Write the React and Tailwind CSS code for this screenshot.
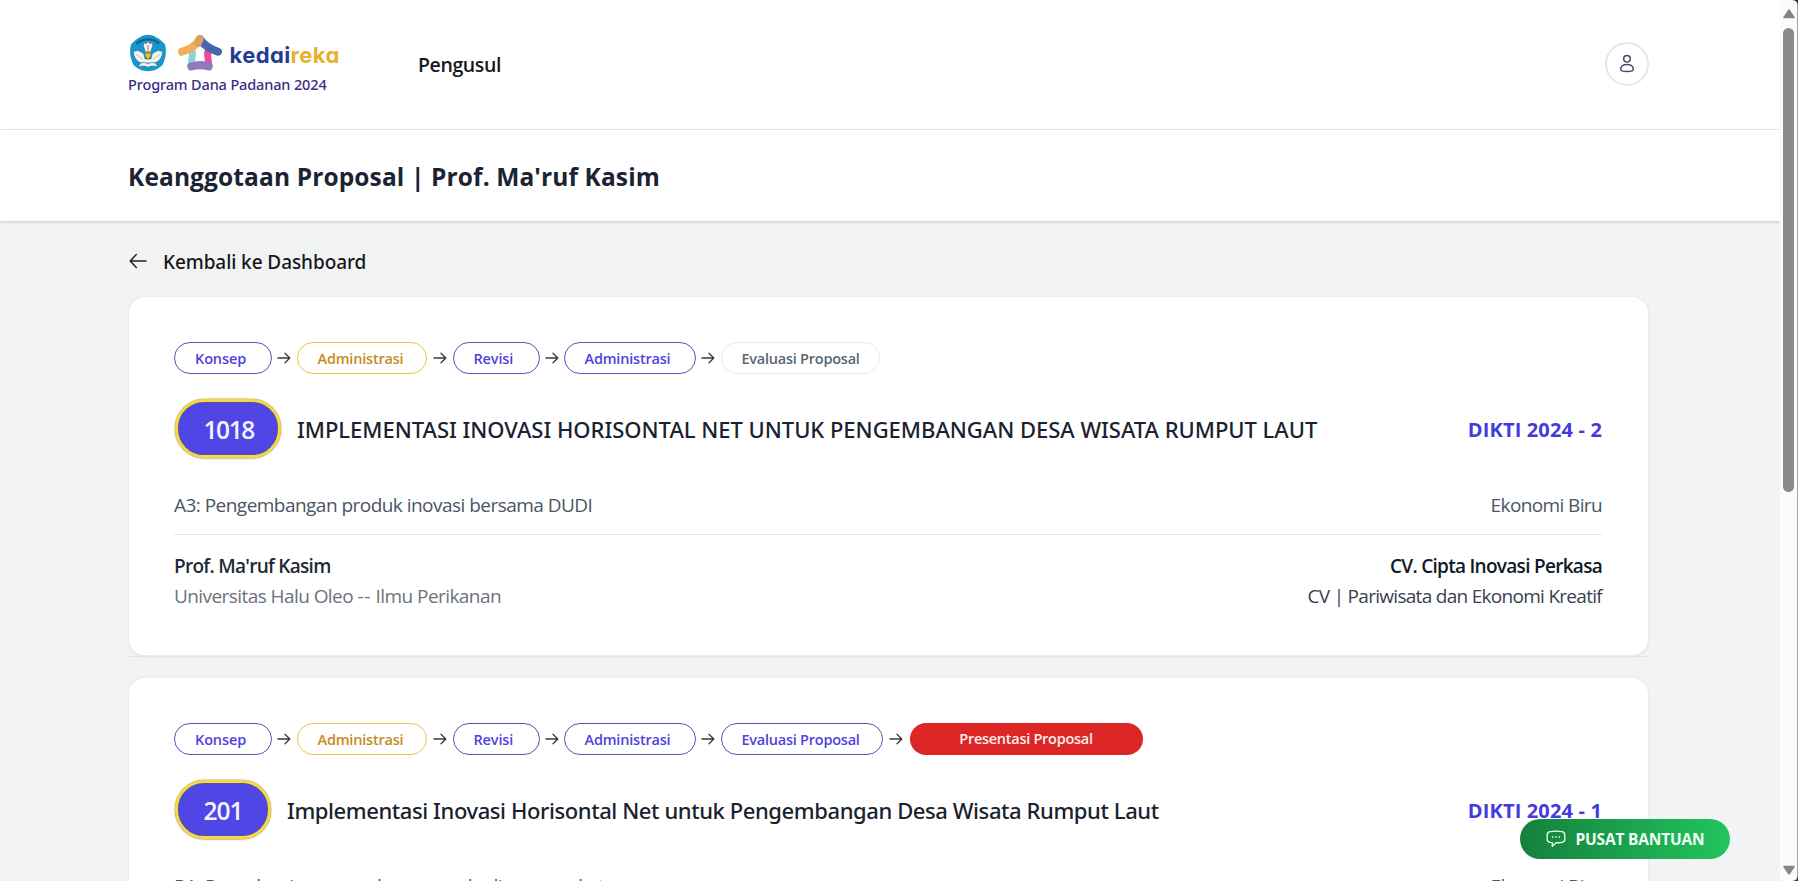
const OPEN = "font-['Open_Sans',sans-serif]";
const NOTO = "font-['Noto_Sans',sans-serif]";

function ArrowRight({ box }) {
  return (
    <span className={`flex shrink-0 items-center justify-center ${box}`}>
      <svg width="14" height="12" viewBox="0 0 14 12" fill="none" stroke="#3a3a3a" strokeWidth="1.3" strokeLinecap="round" strokeLinejoin="round">
        <path d="M1 6H12.6M8 1.2L12.8 6L8 10.8" />
      </svg>
    </span>
  );
}

const tones = {
  indigo: "border-[#5a52b8] text-[#4f42e0]",
  amber: "border-[#e9c44f] text-[#c98a20]",
  gray: "border-[#e5e9ec] text-[#5a6672]",
};

function Step({ width, tone, tracking, children }) {
  return (
    <span className={`flex h-8 shrink-0 items-center whitespace-nowrap rounded-full border-[1.5px] pl-[20px] pt-0.5 text-[14.5px] leading-none font-semibold ${width} ${tones[tone]} ${tracking}`}>
      {children}
    </span>
  );
}

function Steps({ last }) {
  return (
    <div className="flex h-8 items-center">
      <Step width="w-[98px]" tone="indigo" tracking="tracking-[-0.12px]">Konsep</Step>
      <ArrowRight box="w-[24.5px]" />
      <Step width="w-[130.5px]" tone="amber" tracking="tracking-[-0.2px]">Administrasi</Step>
      <ArrowRight box="w-[25.5px]" />
      <Step width="w-[87.5px]" tone="indigo" tracking="tracking-[-0.16px]">Revisi</Step>
      <ArrowRight box="w-[23.5px]" />
      <Step width="w-[132px]" tone="indigo" tracking="tracking-[-0.2px]">Administrasi</Step>
      <ArrowRight box="w-[25px]" />
      {last ? (
        <>
          <Step width="w-[162px]" tone="indigo" tracking="tracking-[-0.24px]">Evaluasi Proposal</Step>
          <ArrowRight box="w-[27px]" />
          <span className="flex h-8 w-[233px] items-center justify-center rounded-full bg-[#dc2626] text-[14.5px] leading-none font-semibold tracking-[-0.27px] text-[#fdeeee]">
            {last}
          </span>
        </>
      ) : (
        <Step width="w-[159px]" tone="gray" tracking="tracking-[-0.24px]">Evaluasi Proposal</Step>
      )}
    </div>
  );
}

function Card({ last, badge, badgeClass, title, titleClass, batch, topic, topicClass }) {
  return (
    <section className="h-[358px] shrink-0 rounded-2xl bg-white pt-[45px] pr-[46px] pl-[45px] shadow-[0_0_0_1px_#e9ecf0,0_1px_2px_1px_#dfe3e9]">
      <Steps last={last} />
      <div className="mt-6 flex h-[61px] items-center justify-between">
        <div className="flex items-center gap-4 pl-[0.5px]">
          <span className={`flex h-[59px] items-center rounded-[29px] border-[3px] border-[#f1d94a] bg-[#4f46e5] pt-[3px] pl-[26px] text-[24.5px] leading-none font-semibold text-[#f3f2ff] shadow-[inset_0_0_0_1px_#5a4fa0,0_1px_3px_#00000022,0_0_0_0.5px_#cdbb5c] ${badgeClass}`}>
            {badge}
          </span>
          <h2 className={`${NOTO} whitespace-nowrap text-[22px] leading-none font-medium text-[#1a2230] ${titleClass}`}>{title}</h2>
        </div>
        <span className="whitespace-nowrap pt-0.5 text-[20px] leading-none font-bold tracking-[0.15px] text-[#443bdb]">{batch}</span>
      </div>
      <div className="mt-8 flex h-7 items-center justify-between text-[19px] text-[#4b5563]">
        <span className={topicClass}>{topic}</span>
        <span className="tracking-[-0.62px]">Ekonomi Biru</span>
      </div>
      <div className="mt-[15px] h-px bg-[#e5e7eb]" />
      <div className="mt-4 flex justify-between text-[19px] leading-[30px]">
        <div>
          <p className="font-semibold tracking-[-0.72px] text-[#1f2937]">Prof. Ma'ruf Kasim</p>
          <p className="tracking-[-0.57px] text-[#6b7280]">Universitas Halu Oleo <span className="tracking-[0.8px]">--</span> Ilmu Perikanan</p>
        </div>
        <div className="text-right">
          <p className="font-semibold tracking-[-0.71px] text-[#111827]">CV. Cipta Inovasi Perkasa</p>
          <p className="tracking-[-0.71px] text-[#374151]">CV | Pariwisata dan Ekonomi Kreatif</p>
        </div>
      </div>
    </section>
  );
}

function Emblem() {
  return (
    <svg width="38" height="38" viewBox="0 0 38 38">
      <path d="M19 .8C23.500 .8 30.500 4 36 10.500C37.800 17 37 23.500 33.500 31C29 35.500 24 37.200 19 37.200C14 37.200 9 35.500 4.500 31C1 23.500 .2 17 2 10.500C7.500 4 14.500 .8 19 .8Z" fill="#1596d1" />
      <path d="M7.500 9.800C14 3.800 24 3.800 30.500 9.800" fill="none" stroke="#174d6b" strokeWidth="2.200" strokeDasharray="1.800 .7" />
      <path d="M15 8.500L17 10L19 7.500L21 10L23 8.500L23.500 12L21.500 18H16.500L14.500 12Z" fill="#f4f4ee" stroke="#6b7377" strokeWidth=".6" />
      <path d="M4.500 17.500L9 16.500L14.500 19.500L16 25H22L23.500 19.500L29 16.500L33.500 17.500C33.500 24 29.500 28 25 29H13C8.500 28 4.500 24 4.500 17.500Z" fill="#f4f4ee" stroke="#4c6e80" strokeWidth=".6" />
      <path d="M7 20.500L14 25M31 20.500L24 25" stroke="#a9b6bc" strokeWidth=".7" />
      <path d="M17 18.500H21L22 21.500L19 25.500L16 21.500Z" fill="#f1c40f" stroke="#83702a" strokeWidth=".4" />
      <path d="M19 11V20" stroke="#646a66" strokeWidth=".8" />
      <path d="M11 29.500C14 28 17 28.500 19 30C21 28.500 24 28 27 29.500L28.500 33C25 31.500 21 32 19 33.300C17 32 13 31.500 9.500 33Z" fill="#f4f4ee" stroke="#4c6e80" strokeWidth=".6" />
    </svg>
  );
}

function House() {
  return (
    <svg width="46" height="38" viewBox="0 0 46 38" fill="none" strokeLinecap="round">
      <path d="M15.500 19L14.300 31" stroke="#8fd3da" strokeWidth="7" />
      <path d="M30.500 19L31.700 31" stroke="#ee4aa0" strokeWidth="7" />
      <path d="M23 5.200C26.500 10.500 32 14.700 41 17.700" stroke="#4766b0" strokeWidth="8" />
      <path d="M5 17.700C13.500 15.500 19.500 11 22.500 5.200" stroke="#f3ae58" strokeWidth="8" />
      <path d="M21.200 9.500L22.600 5.800" stroke="#d9a160" strokeWidth="7" />
      <path d="M14.300 32.500C20 30.700 26 30.700 31.700 32.500" stroke="#8f78be" strokeWidth="8" />
    </svg>
  );
}

function Scrollbar() {
  return (
    <div className="relative flex h-full w-[18px] shrink-0 flex-col items-center border-r border-[#a5a5a5] bg-[#fbfbfb]">
      <svg className="mt-[9px]" width="12" height="10" viewBox="0 0 12 10"><path d="M6 1L11 8.500H1Z" fill="#858585" stroke="#858585" strokeWidth="1.500" strokeLinejoin="round" /></svg>
      <div className="mt-[9px] h-[464px] w-[11px] rounded-full bg-[#8b8b8b]" />
      <svg className="mt-auto mb-[6px]" width="12" height="10" viewBox="0 0 12 10"><path d="M6 9L11 1.500H1Z" fill="#858585" stroke="#858585" strokeWidth="1.500" strokeLinejoin="round" /></svg>
      <svg className="absolute top-0 -right-px" width="6" height="6"><path d="M0 0H6V6C6 3 4 0 0 0Z" fill="#2b2b30" /></svg>
      <svg className="absolute -right-px bottom-0" width="6" height="6"><path d="M0 6H6V0C6 3 4 6 0 6Z" fill="#2b2b30" /></svg>
    </div>
  );
}

export default function App() {
  return (
    <div className={`relative flex h-[881px] w-[1798px] overflow-hidden bg-[#f2f3f5] ${OPEN}`}>
      <div className="flex h-full flex-1 flex-col overflow-hidden">
        <header className="flex h-[130px] shrink-0 items-center border-b border-[#eceef1] bg-white pr-[131px] pb-px pl-[128px]">
          <div className="flex w-[290px] flex-col">
            <div className="flex h-[38px] items-center">
              <span className="ml-[1px] flex"><Emblem /></span>
              <span className="ml-[10px] flex"><House /></span>
              <span className="ml-[6.5px] pt-[5px] font-['Inter',sans-serif] text-[22px] leading-none font-bold tracking-[0.38px] text-[#1f3d93] [font-feature-settings:'cv11']">
                kedai<span className="text-[#eab02b]">reka</span>
              </span>
            </div>
            <span className={`${NOTO} whitespace-nowrap pt-px text-[14.5px] leading-[22px] font-medium tracking-[-0.14px] text-[#3a2d86]`}>Program Dana Padanan 2024</span>
          </div>
          <span className="pt-px text-[19.5px] leading-none font-semibold tracking-[-0.4px] text-[#18181b]">Pengusul</span>
          <button className="ml-auto flex size-11 items-center justify-center rounded-full border-2 border-[#e5e7eb] bg-white">
            <svg width="16" height="20" viewBox="0 0 16 20" fill="none" stroke="#434c60" strokeWidth="1.500">
              <circle cx="8" cy="4.700" r="3.300" />
              <path d="M1.700 15.300C1.700 12.200 4.500 10.400 8 10.400S14.300 12.200 14.300 15.300C14.300 17 12.200 17.600 8 17.600S1.700 17 1.700 15.300Z" />
            </svg>
          </button>
        </header>
        <div className="z-10 flex h-[91px] shrink-0 items-center bg-white pt-[4px] pl-[128px] shadow-[0_1px_3px_#00000030]">
          <h1 className="whitespace-nowrap text-[24.5px] leading-none font-bold tracking-[0.12px] text-[#1a2432]">Keanggotaan Proposal | Prof. Ma'ruf Kasim</h1>
        </div>
        <main className="flex flex-col pr-[132px] pl-[129px]">
          <a className="flex h-[76px] items-center gap-[16px] pt-[5px]">
            <span className="flex pb-0.5"><svg width="18" height="16" viewBox="0 0 18 16" fill="none" stroke="#222" strokeWidth="1.500" strokeLinecap="round" strokeLinejoin="round">
              <path d="M17 8H1.500M7.300 1.600L1.200 8L7.300 14.400" />
            </svg></span>
            <span className={`${NOTO} whitespace-nowrap pt-0.5 text-[19px] leading-none font-medium tracking-[-0.08px] text-[#171717]`}>Kembali ke Dashboard</span>
          </a>
          <Card
            badge="1018"
            badgeClass="w-[106.500px] tracking-[-1.4px]"
            title="IMPLEMENTASI INOVASI HORISONTAL NET UNTUK PENGEMBANGAN DESA WISATA RUMPUT LAUT"
            titleClass="tracking-[-0.02px]"
            batch="DIKTI 2024 - 2"
            topic="A3: Pengembangan produk inovasi bersama DUDI"
            topicClass="tracking-[-0.53px]"
          />
          <div className="mt-px mb-[21px] h-px shrink-0 bg-[#e0e4e8]" />
          <Card
            last="Presentasi Proposal"
            badge="201"
            badgeClass="w-[96.500px] tracking-[-1px]"
            title="Implementasi Inovasi Horisontal Net untuk Pengembangan Desa Wisata Rumput Laut"
            titleClass="tracking-[-0.41px]"
            batch="DIKTI 2024 - 1"
            topic="B1: Penyelesaian persoalan yang ada di masyarakat"
            topicClass="tracking-[-0.53px]"
          />
        </main>
      </div>
      <Scrollbar />
      <button className="absolute top-[819px] left-[1520px] z-20 flex h-10 w-[210px] items-center gap-[10px] rounded-full bg-gradient-to-r from-[#15803d] to-[#22c55e] pl-[25.500px]">
        <svg width="20" height="18" viewBox="0 0 20 18" fill="none" stroke="#effff4" strokeWidth="1.300" strokeLinejoin="round">
          <path d="M4 1.700C8 1 12 1 16 1.700C17.800 2 18.800 3.200 18.800 4.800V9.200C18.800 10.800 17.800 12 16 12.300C14 12.600 12 12.800 10 12.800L6.300 16.300V12.600L4 12.300C2.200 12 1.200 10.800 1.200 9.200V4.800C1.200 3.200 2.200 2 4 1.700Z" />
          <path d="M6 7H7.400M9.300 7H10.700M12.600 7H14" strokeWidth="1.500" />
        </svg>
        <span className="whitespace-nowrap pt-px text-[15.500px] leading-none font-bold tracking-[-0.18px] text-[#effff4]">PUSAT BANTUAN</span>
      </button>
    </div>
  );
}
